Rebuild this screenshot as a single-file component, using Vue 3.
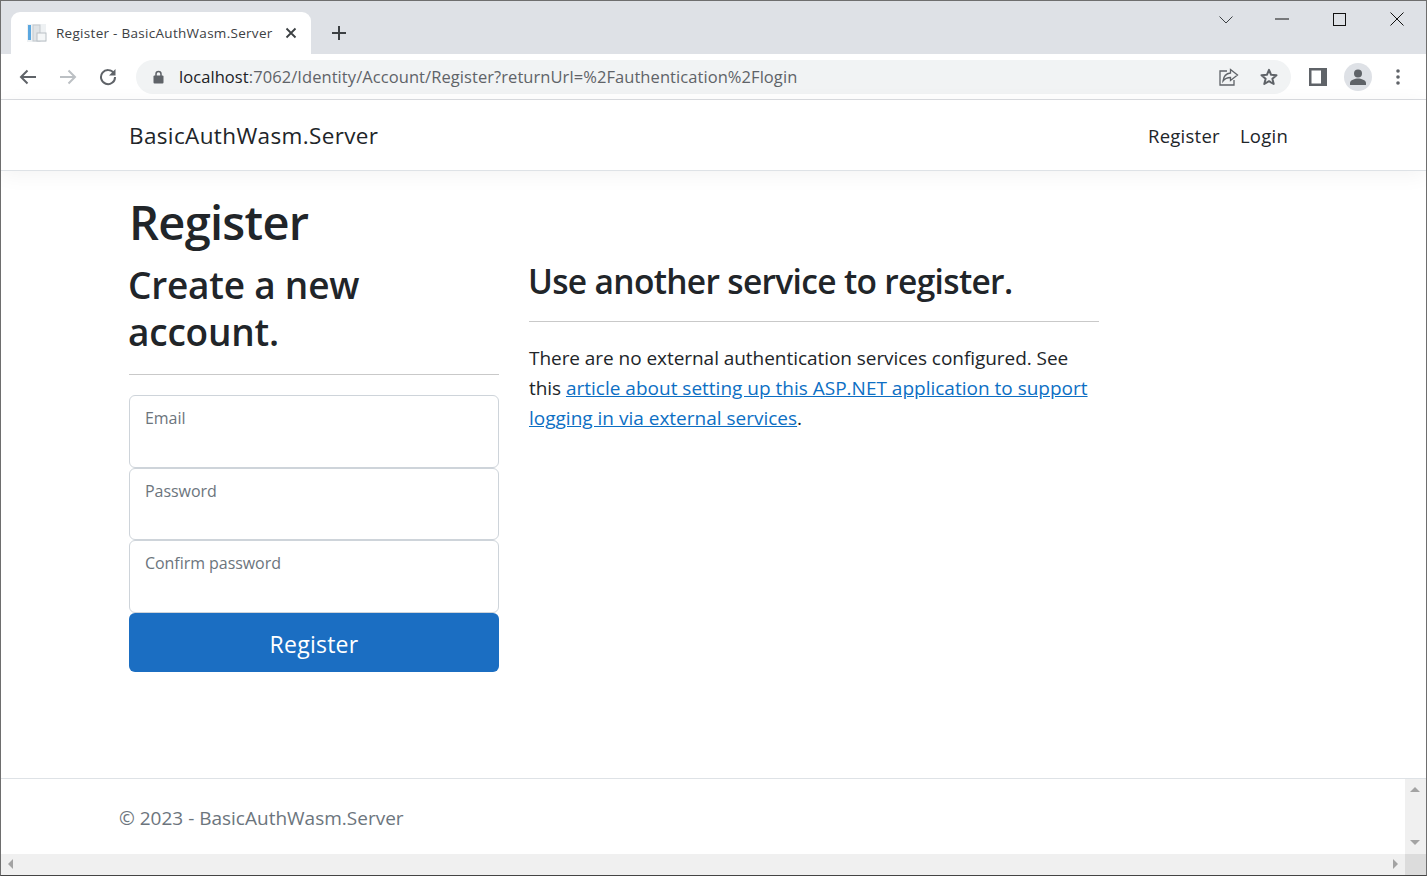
<script setup>
const fields = [
  { label: 'Email', height: 73 },
  { label: 'Password', height: 72 },
  { label: 'Confirm password', height: 73 },
]
</script>

<template>
  <div class="window">
    <header class="tabstrip">
      <div class="tab">
        <svg class="favicon" width="20" height="20" viewBox="0 0 20 20">
          <rect x="0" y="1" width="19" height="18" fill="#eef1f3" />
          <rect x="1" y="2" width="3" height="15" fill="#5aa7e0" />
          <rect x="6" y="2" width="7" height="16" fill="#dfe3e6" stroke="#c3c9ce" stroke-width="1" />
          <rect x="10" y="10" width="9" height="8" fill="#f4f6f7" stroke="#b9c0c5" stroke-width="1" />
        </svg>
        <span class="tab-title">Register - BasicAuthWasm.Server</span>
        <svg class="tab-close" width="12" height="12" viewBox="0 0 12 12">
          <path d="M1.5 1.5 10.5 10.5M10.5 1.5 1.5 10.5" stroke="#3c4043" stroke-width="1.8" fill="none" />
        </svg>
      </div>
      <svg class="new-tab" width="16" height="16" viewBox="0 0 16 16">
        <path d="M8 1v14M1 8h14" stroke="#3c4043" stroke-width="2" fill="none" />
      </svg>
      <div class="window-controls">
        <svg class="ctl-chevron" width="14" height="8" viewBox="0 0 14 8">
          <path d="M.5.5 7 7 13.5.5" stroke="#3c4043" stroke-width="1" fill="none" />
        </svg>
        <svg class="ctl-min" width="14" height="2" viewBox="0 0 14 2">
          <path d="M0 1h14" stroke="#111" stroke-width="1" fill="none" />
        </svg>
        <svg class="ctl-max" width="13" height="13" viewBox="0 0 13 13">
          <rect x=".5" y=".5" width="12" height="12" stroke="#111" stroke-width="1" fill="none" />
        </svg>
        <svg class="ctl-close" width="14" height="14" viewBox="0 0 14 14">
          <path d="M.5.5 13.5 13.5M13.5.5.5 13.5" stroke="#111" stroke-width="1" fill="none" />
        </svg>
      </div>
    </header>

    <div class="toolbar">
      <svg class="nav-ic" width="18" height="16" viewBox="0 0 18 16">
        <path d="M17 8H2.500M8.500 1.500 2 8l6.500 6.500" stroke="#5f6368" stroke-width="2" fill="none" />
      </svg>
      <svg class="nav-ic" width="18" height="16" viewBox="0 0 18 16">
        <path d="M1 8h14.500M9.500 1.500 16 8l-6.500 6.500" stroke="#bcc0c4" stroke-width="2" fill="none" />
      </svg>
      <svg class="nav-ic" width="18" height="18" viewBox="0 0 18 18">
        <path d="M15 5.500A7 7 0 1 0 16 9" stroke="#5f6368" stroke-width="2" fill="none" />
        <path d="M16.500 1v6.500H10z" fill="#5f6368" />
      </svg>
      <div class="omnibox">
        <svg width="11" height="14" viewBox="0 0 11 14" class="lock">
          <path d="M3 6V4a2.500 2.500 0 0 1 5 0v2" stroke="#5f6368" stroke-width="1.500" fill="none" />
          <rect x=".5" y="5.500" width="10" height="8" rx="1" fill="#5f6368" />
        </svg>
        <span class="url"><span class="host">localhost</span>:7062/Identity/Account/Register?returnUrl=%2Fauthentication%2Flogin</span>
        <svg class="share" width="20" height="18" viewBox="0 0 20 18">
          <path d="M8 3H1v14h14v-5" stroke="#5f6368" stroke-width="1.300" fill="none" />
          <path d="M11.500 1.500 18.500 7l-7 5.500V9.500C8 9.500 6 10.500 4 13c.5-4.500 3-7.500 7.500-8z" stroke="#5f6368" stroke-width="1.300" fill="#f1f3f4" />
        </svg>
        <svg class="star" width="18" height="18" viewBox="0 0 18 18">
          <path d="M9 1.800 11.100 6.800 16.500 7.200 12.400 10.700 13.700 16 9 13.200 4.300 16 5.600 10.700 1.500 7.200 6.900 6.800z" stroke="#5f6368" stroke-width="2" fill="none" stroke-linejoin="round" />
        </svg>
      </div>
      <svg class="side" width="18" height="18" viewBox="0 0 18 18">
        <rect width="18" height="18" fill="#5f6368" />
        <rect x="2.500" y="2.500" width="9.500" height="13" fill="#fff" />
      </svg>
      <div class="avatar">
        <svg width="18" height="16" viewBox="0 0 18 16">
          <circle cx="9" cy="4.500" r="4" fill="#5f6368" />
          <path d="M1 16v-2c0-3 5-4.500 8-4.500s8 1.500 8 4.500v2z" fill="#5f6368" />
        </svg>
      </div>
      <svg class="dots" width="4" height="16" viewBox="0 0 4 16">
        <circle cx="2" cy="2" r="1.800" fill="#5f6368" />
        <circle cx="2" cy="8" r="1.800" fill="#5f6368" />
        <circle cx="2" cy="14" r="1.800" fill="#5f6368" />
      </svg>
    </div>

    <div class="viewport">
      <nav class="navbar">
        <a class="brand">BasicAuthWasm.Server</a>
        <div class="nav-links">
          <a>Register</a>
          <a>Login</a>
        </div>
      </nav>

      <main class="main">
        <h1>Register</h1>
        <div class="row">
          <section class="col-form">
            <h2>Create a new account.</h2>
            <hr />
            <div
              v-for="f in fields"
              :key="f.label"
              class="field"
              :style="{ height: f.height + 'px' }"
            >{{ f.label }}</div>
            <button class="submit" type="button">Register</button>
          </section>
          <section class="col-ext">
            <h3>Use another service to register.</h3>
            <hr />
            <p>There are no external authentication services configured. See this <a>article about setting up this ASP.NET application to support logging in via external services</a>.</p>
          </section>
        </div>
      </main>

      <div class="footer-row">
        <footer class="footer">© 2023 - BasicAuthWasm.Server</footer>
        <div class="vscroll">
          <i class="arrow up"></i>
          <i class="arrow down"></i>
        </div>
      </div>
      <div class="hscroll-row">
        <div class="hscroll">
          <i class="arrow left"></i>
          <i class="arrow right"></i>
        </div>
        <div class="corner"></div>
      </div>
    </div>
  </div>
</template>

<style>
html, body { margin: 0; background: #fff; overflow: hidden; }
</style>

<style scoped>
.window {
  width: 1427px;
  height: 876px;
  box-sizing: border-box;
  border: 1px solid #6e6e6e;
  border-bottom-color: #444;
  display: flex;
  flex-direction: column;
  font-family: "Open Sans", "Noto Sans", sans-serif;
  color: #212529;
  overflow: hidden;
}
.tabstrip {
  height: 53px;
  flex: none;
  background: #dee1e6;
  display: flex;
  align-items: flex-start;
  padding: 11px 0 0 10px;
  box-sizing: border-box;
}
.tab {
  width: 300px;
  height: 42px;
  box-sizing: border-box;
  background: #fff;
  border-radius: 9px 9px 0 0;
  display: flex;
  align-items: center;
  padding: 0 14px 0 16px;
  font-size: 13.500px;
  color: #3c4043;
}
.favicon { flex: none; margin-right: 9px; }
.tab-title { flex: 1; white-space: nowrap; letter-spacing: .29px; }
.tab-close { flex: none; }
.new-tab { margin: 13px 0 0 20px; }
.window-controls {
  margin-left: auto;
  display: flex;
  align-items: center;
  height: 18px;
  margin-top: -2px;
  padding-right: 22px;
}
.ctl-chevron { margin-right: 42px; margin-top: 2px; }
.ctl-min { margin-right: 44px; }
.ctl-max { margin-right: 44px; }
.toolbar {
  height: 46px;
  flex: none;
  box-sizing: border-box;
  background: #fff;
  border-bottom: 1px solid #dadce0;
  display: flex;
  align-items: center;
  padding: 0 0 0 18px;
}
.nav-ic { margin-right: 22px; flex: none; }
.omnibox {
  width: 1155px;
  height: 34px;
  margin-left: -3px;
  flex: none;
  background: #f1f3f4;
  border-radius: 17px;
  display: flex;
  align-items: center;
  padding: 0 13px 0 17px;
  box-sizing: border-box;
}
.lock { flex: none; margin-right: 15px; }
.url { flex: 1; font-size: 16.500px; color: #5f6368; white-space: nowrap; letter-spacing: .07px; }
.host { color: #202124; }
.share { margin-right: 21px; flex: none; }
.star { flex: none; }
.side { margin-left: 18px; flex: none; }
.avatar {
  width: 28px;
  height: 28px;
  border-radius: 50%;
  background: #dee1e6;
  margin-left: 17px;
  display: flex;
  align-items: center;
  justify-content: center;
  flex: none;
}
.dots { margin-left: 24px; flex: none; }
.viewport {
  flex: 1;
  display: flex;
  flex-direction: column;
  min-height: 0;
}
.navbar {
  height: 71px;
  flex: none;
  box-sizing: border-box;
  border-bottom: 1px solid #dee2e6;
  box-shadow: 0 4px 20px rgba(0, 0, 0, .05);
  display: flex;
  align-items: center;
  justify-content: space-between;
  padding: 0 138px 0 128px;
}
.brand { font-size: 22.500px; letter-spacing: .37px; }
.nav-links { display: flex; gap: 20px; letter-spacing: .25px; font-size: 18.500px; }
.main {
  flex: 1;
  padding: 19px 0 0 128px;
  min-height: 0;
}
h1 {
  margin: 0;
  font-size: 47px;
  line-height: 64px;
  font-weight: 600;
  letter-spacing: -.72px;
}
.row { display: flex; gap: 30px; }
.col-form { width: 370px; }
.col-ext { width: 570px; padding-top: 4px; }
h2 {
  margin: 0 0 0 -1px;
  font-size: 37px;
  line-height: 47px;
  font-weight: 600;
  letter-spacing: -.22px;
}
.col-form h2 { padding-top: 7px; }
h3 {
  margin: 0 0 0 -1px;
  font-size: 33.500px;
  line-height: 47px;
  font-weight: 600;
  letter-spacing: -.67px;
}
hr {
  margin: 19px 0 20px;
  height: 1px;
  border: 0;
  background: #c9c9c9;
}
.col-ext hr { margin-top: 16px; margin-bottom: 21px; }
.field {
  box-sizing: border-box;
  border: 1px solid #ced4da;
  border-radius: 6px;
  padding: 11px 15px;
  font-size: 16px;
  color: #6c757d;
  line-height: 22px;
  letter-spacing: -.05px;
}
.submit {
  display: block;
  width: 100%;
  height: 59px;
  border: 0;
  border-radius: 6px;
  background: #1b6ec2;
  color: #fff;
  font-family: inherit;
  font-size: 23px;
  letter-spacing: .25px;
  padding: 2px 0 0;
}
p {
  margin: 0;
  font-size: 19px;
  line-height: 30px;
  letter-spacing: -.05px;
}
p a { color: #0d6fc4; text-decoration: underline; letter-spacing: 0; }
.footer-row {
  height: 76px;
  flex: none;
  box-sizing: border-box;
  border-top: 1px solid #dee2e6;
  display: flex;
}
.footer {
  flex: 1;
  padding: 26px 0 0 118px;
  font-size: 19px;
  line-height: 26px;
  color: #6c757d;
  letter-spacing: 0;
}
.vscroll {
  width: 21px;
  flex: none;
  background: #f0f0f0;
  position: relative;
}
.hscroll-row { flex: none; height: 21px; display: flex; }
.hscroll {
  flex: 1;
  background: #f0f0f0;
  position: relative;
}
.corner { width: 21px; flex: none; background: #dcdcdc; }
.arrow { position: absolute; width: 0; height: 0; border-style: solid; border-color: transparent; }
.up { top: 8px; left: 5px; border-width: 0 5px 5px; border-bottom-color: #a3a3a3; }
.down { bottom: 9px; left: 5px; border-width: 5px 5px 0; border-top-color: #a3a3a3; }
.left { left: 7px; top: 5px; border-width: 5px 5px 5px 0; border-right-color: #a3a3a3; }
.right { right: 7px; top: 5px; border-width: 5px 0 5px 5px; border-left-color: #a3a3a3; }
</style>
